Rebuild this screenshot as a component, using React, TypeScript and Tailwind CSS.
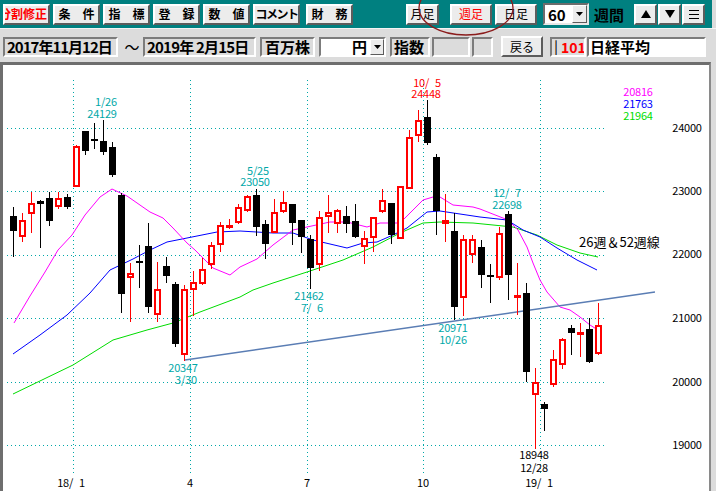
import React from 'react';

type Candle = [number, number, number, number, 'r' | 'b'];

// wickTop, bodyTop, bodyBottom, wickBottom, colour — one per week, x = 13 + 9 * i
const candles: Candle[] = [
  [207, 216, 231, 257, 'b'], [213, 220, 237, 242, 'r'], [192, 203, 214, 233, 'r'], [200, 201, 204, 248, 'b'],
  [192, 198, 221, 226, 'b'], [192, 198, 207, 209, 'r'], [194, 197, 207, 209, 'b'], [145, 146, 187, 187, 'r'],
  [131, 131, 151, 155, 'b'], [123, 139, 141, 149, 'b'], [120, 141, 152, 155, 'b'], [142, 147, 175, 177, 'b'],
  [193, 195, 294, 313, 'b'], [263, 273, 278, 322, 'r'], [245, 261, 263, 288, 'b'], [223, 246, 307, 313, 'b'],
  [262, 289, 315, 322, 'r'], [257, 266, 276, 283, 'b'], [282, 284, 344, 347, 'b'], [285, 289, 355, 361, 'r'],
  [271, 282, 290, 316, 'r'], [258, 269, 284, 285, 'r'], [242, 245, 265, 269, 'r'], [222, 225, 245, 252, 'r'],
  [219, 225, 227, 229, 'r'], [204, 207, 223, 224, 'r'], [195, 196, 211, 212, 'r'], [189, 195, 227, 236, 'b'],
  [220, 224, 244, 259, 'b'], [199, 212, 233, 233, 'r'], [191, 202, 212, 213, 'r'], [204, 204, 223, 245, 'b'],
  [220, 220, 237, 253, 'b'], [235, 239, 268, 289, 'b'], [211, 217, 265, 271, 'r'], [195, 212, 217, 233, 'r'],
  [209, 210, 224, 233, 'r'], [206, 216, 224, 233, 'b'], [204, 221, 237, 238, 'b'], [231, 238, 247, 264, 'r'],
  [217, 217, 238, 252, 'r'], [189, 200, 212, 213, 'r'], [203, 203, 235, 244, 'b'], [186, 186, 239, 239, 'r'],
  [130, 137, 189, 189, 'r'], [110, 120, 136, 142, 'r'], [100, 117, 143, 145, 'b'], [154, 157, 211, 235, 'b'],
  [194, 220, 224, 242, 'r'], [213, 231, 307, 320, 'b'], [235, 239, 298, 316, 'r'], [235, 239, 255, 263, 'r'],
  [240, 247, 275, 288, 'b'], [264, 275, 277, 303, 'b'], [227, 233, 278, 280, 'r'], [211, 214, 275, 300, 'b'],
  [263, 295, 298, 315, 'r'], [283, 293, 372, 382, 'b'], [368, 382, 395, 449, 'r'], [402, 404, 409, 431, 'b'],
  [350, 359, 385, 387, 'r'], [338, 339, 365, 369, 'r'], [325, 328, 333, 355, 'b'], [323, 332, 334, 357, 'r'],
  [318, 329, 362, 363, 'b'], [303, 325, 354, 355, 'r'],
];

const ma13 = '14,323 30,296 45,272 58,250 72,235 85,215 100,197 112,189 127,196 150,212 163,218 173,228 187,243 195,250 203,258 213,268 230,275 240,267 257,259 273,245 293,230 307,227 330,222 347,222 367,227 380,223 400,223 410,213 423,200 433,197 440,197 453,205 473,207 480,209 508,220 518,230 527,247 533,263 540,280 547,292 560,307 570,310 580,317 590,325 598,330';
const ma26 = '13,354 40,335 67,315 90,293 110,270 133,259 150,250 167,242 187,238 217,232 240,231 273,233 293,233 313,240 347,248 363,243 377,242 393,235 407,228 427,212 440,211 460,214 480,217 507,220 523,230 540,237 557,248 577,260 597,270';
const ma52 = '13,394 73,365 97,350 113,340 147,330 173,323 200,312 240,297 253,290 273,283 307,272 343,260 373,247 400,233 423,223 440,222 473,223 513,227 537,235 557,245 580,253 598,257';

const teal = '#00a8a8';
const sp = '\u2007';

function Raised({ className = '', children }: { className?: string; children?: React.ReactNode }) {
  return (
    <div className={`flex items-center justify-center bg-[#ececec] border-2 border-t-white border-l-white border-r-[#5c5c5c] border-b-[#5c5c5c] text-[12px] leading-none whitespace-nowrap ${className}`}>
      {children}
    </div>
  );
}

function Sunken({ className = '', children }: { className?: string; children?: React.ReactNode }) {
  return (
    <div className={`flex items-center h-[20px] border-2 border-t-[#7c7c7c] border-l-[#7c7c7c] border-b-white border-r-white text-[15px] font-bold leading-none whitespace-nowrap overflow-hidden ${className}`}>
      {children}
    </div>
  );
}

function DownArrow() {
  return (
    <svg width="7" height="4" viewBox="0 0 7 4"><polygon points="0,0 7,0 3.5,4" fill="#000" /></svg>
  );
}

function Chart() {
  return (
    <svg width="706" height="426" viewBox="3 65 706 426" className="block" shapeRendering="crispEdges">
      {[128, 191, 255, 318, 382, 445].map((y) => (
        <line key={y} x1="7" x2="605" y1={y + 0.5} y2={y + 0.5} stroke={teal} strokeDasharray="1 3" />
      ))}
      {[73, 190, 307, 423, 540].map((x) => (
        <line key={x} x1={x + 0.5} x2={x + 0.5} y1="80" y2="473" stroke={teal} strokeDasharray="1 3" />
      ))}

      <g shapeRendering="auto" fill="none" strokeWidth="1">
        <polyline points={ma52} stroke="#00dc00" />
        <polyline points={ma26} stroke="#0000ff" />
        <polyline points={ma13} stroke="#ff00ff" />
        <line x1="185" y1="360" x2="655" y2="292" stroke="#5a7db4" strokeWidth="1.4" />
      </g>

      {candles.map(([wt, bt, bb, wb, c], i) => {
        const x = 13 + 9 * i;
        if (c === 'b') {
          return (
            <g key={i}>
              <line x1={x + 0.5} x2={x + 0.5} y1={wt} y2={wb} stroke="#000" />
              <rect x={x - 3} y={bt} width="7" height={Math.max(bb - bt, 2)} fill="#000" />
            </g>
          );
        }
        return (
          <g key={i} stroke="#ff0000">
            {bt > wt && <line x1={x + 0.5} x2={x + 0.5} y1={wt} y2={bt} />}
            {wb > bb && <line x1={x + 0.5} x2={x + 0.5} y1={bb} y2={wb} />}
            <rect x={x - 2} y={bt + 1} width="5" height={Math.max(bb - bt - 2, 1)} fill="#fff" strokeWidth="2" />
          </g>
        );
      })}

      <g fontSize="11" letterSpacing="-0.2" textAnchor="middle" shapeRendering="auto">
        <text x="106" y="106" fill={teal}>1/26</text>
        <text x="102" y="118" fill={teal}>24129</text>
        <text x="258" y="175" fill={teal}>5/25</text>
        <text x="255" y="186" fill={teal}>23050</text>
        <text x="427" y="87" fill="#ff0000">{`10/${sp}5`}</text>
        <text x="426" y="98" fill="#ff0000">24448</text>
        <text x="507" y="197" fill={teal}>{`12/${sp}7`}</text>
        <text x="507" y="209" fill={teal}>22698</text>
        <text x="309" y="300" fill={teal}>21462</text>
        <text x="312" y="312" fill={teal}>{`7/${sp}6`}</text>
        <text x="453" y="332" fill={teal}>20971</text>
        <text x="453" y="344" fill={teal}>10/26</text>
        <text x="183" y="372" fill={teal}>20347</text>
        <text x="186" y="384" fill={teal}>3/30</text>
        <text x="534" y="459" fill="#000">18948</text>
        <text x="534" y="472" fill="#000">12/28</text>

        <text x="71" y="487" fill="#000">{`18/${sp}1`}</text>
        <text x="190" y="487" fill="#000">4</text>
        <text x="307" y="487" fill="#000">7</text>
        <text x="423" y="487" fill="#000">10</text>
        <text x="539" y="487" fill="#000">{`19/${sp}1`}</text>

        <text x="638" y="96" fill="#ff00ff">20816</text>
        <text x="638" y="108" fill="#0000ff">21763</text>
        <text x="638" y="120" fill="#00dc00">21964</text>

        {[[24000, 132], [23000, 195], [22000, 258], [21000, 322], [20000, 386], [19000, 449]].map(([v, y]) => (
          <text key={v} x="687" y={y} fill="#000">{v}</text>
        ))}
      </g>
      <text x="579" y="247" fontSize="13" fill="#000" shapeRendering="auto">26週＆52週線</text>
    </svg>
  );
}

export default function App() {
  return (
    <div className="relative w-[716px] h-[491px] overflow-hidden bg-[#dcdcdc] font-['Noto_Sans_CJK_JP',sans-serif] text-black">
      {/* toolbar */}
      <div className="flex items-center h-[28px] w-[712px] bg-[#008080] pl-[3px] font-bold">
        <Raised className="w-[47px] h-[21px] !justify-end pr-[1px] overflow-hidden text-[#ff0000]"><span>分割修正</span></Raised>
        <Raised className="w-[47px] h-[21px] ml-[3px]">条　件</Raised>
        <Raised className="w-[47px] h-[21px] ml-[3px]">指　標</Raised>
        <Raised className="w-[47px] h-[21px] ml-[3px]">登　録</Raised>
        <Raised className="w-[47px] h-[21px] ml-[3px]">数　値</Raised>
        <Raised className="w-[47px] h-[21px] ml-[3px] tracking-[-1.5px]">コメント</Raised>
        <Raised className="w-[47px] h-[21px] ml-[6px]">財　務</Raised>

        <Raised className="w-[33px] h-[21px] ml-[53px] font-normal">月足</Raised>
        <Raised className="w-[42px] h-[21px] ml-[11px] font-normal text-[#ff0000]">週足</Raised>
        <Raised className="w-[42px] h-[21px] ml-[3px] font-normal">日足</Raised>
        <div className="flex items-center w-[46px] h-[22px] ml-[6px] bg-white border-2 border-t-[#6c6c6c] border-l-[#6c6c6c] border-b-[#e8e8e8] border-r-[#e8e8e8]">
          <span className="flex-1 pl-[3px] text-[15px] leading-none">60</span>
          <Raised className="w-[15px] h-[18px] !border">
            <DownArrow />
          </Raised>
        </div>
        <span className="ml-[5px] text-[15px] leading-none">週間</span>
        <Raised className="w-[23px] h-[21px] ml-[10px]">
          <svg width="10" height="8" viewBox="0 0 10 8"><polygon points="5,0 10,8 0,8" fill="#000" /></svg>
        </Raised>
        <Raised className="w-[23px] h-[21px] ml-[1px]">
          <svg width="10" height="8" viewBox="0 0 10 8"><polygon points="0,0 10,0 5,8" fill="#000" /></svg>
        </Raised>
        <Raised className="w-[23px] h-[21px] ml-[1px]">
          <svg width="10" height="9" viewBox="0 0 10 9" fill="#000"><rect y="0" width="10" height="1" /><rect y="4" width="10" height="1" /><rect y="8" width="10" height="1" /></svg>
        </Raised>
      </div>
      <div className="h-[3px] border-t border-t-[#f4f4f4]" />

      {/* period row */}
      <div className="flex items-center h-[31px]">
        <Sunken className="w-[115px] ml-[3px] pl-[2px] tracking-[-1px]">2017年11月12日</Sunken>
        <span className="w-[20px] ml-[4px] text-center text-[15px] leading-none">～</span>
        <Sunken className="w-[113px] ml-[1px] pl-[2px] tracking-[-0.8px]">2019年 2月15日</Sunken>
        <Sunken className="w-[55px] ml-[4px] justify-center">百万株</Sunken>
        <Sunken className="w-[67px] ml-[4px] bg-white justify-end">
          <span className="mr-[3px]">円</span>
          <Raised className="w-[14px] h-[16px] !border">
            <DownArrow />
          </Raised>
        </Sunken>
        <Sunken className="w-[40px] ml-[4px] pl-[2px]">指数</Sunken>
        <Sunken className="w-[38px] ml-[2px]" />
        <Sunken className="w-[21px] ml-[2px]" />
        <Raised className="w-[42px] h-[21px] ml-[8px]">戻る</Raised>
        <Sunken className="w-[36px] ml-[7px] pl-[2px] gap-[3px]">
          <span className="font-normal">|</span>
          <span className="text-[#ff0000] text-[14px]">101</span>
        </Sunken>
        <Sunken className="w-[119px] ml-[1px] bg-white pl-[1px]">日経平均</Sunken>
      </div>

      {/* chart */}
      <div className="w-[711px] h-[429px] bg-white border-t-[3px] border-l-[3px] border-r-[2px] border-t-[#6e6e6e] border-l-[#6e6e6e] border-r-[#8a8a8a]">
        <Chart />
      </div>

      {/* hand-drawn circle annotation */}
      <svg className="absolute left-0 top-0 pointer-events-none" width="716" height="60">
        <ellipse cx="466" cy="8" rx="47" ry="27" fill="none" stroke="#8b1c1c" strokeWidth="1.3" />
      </svg>
    </div>
  );
}
